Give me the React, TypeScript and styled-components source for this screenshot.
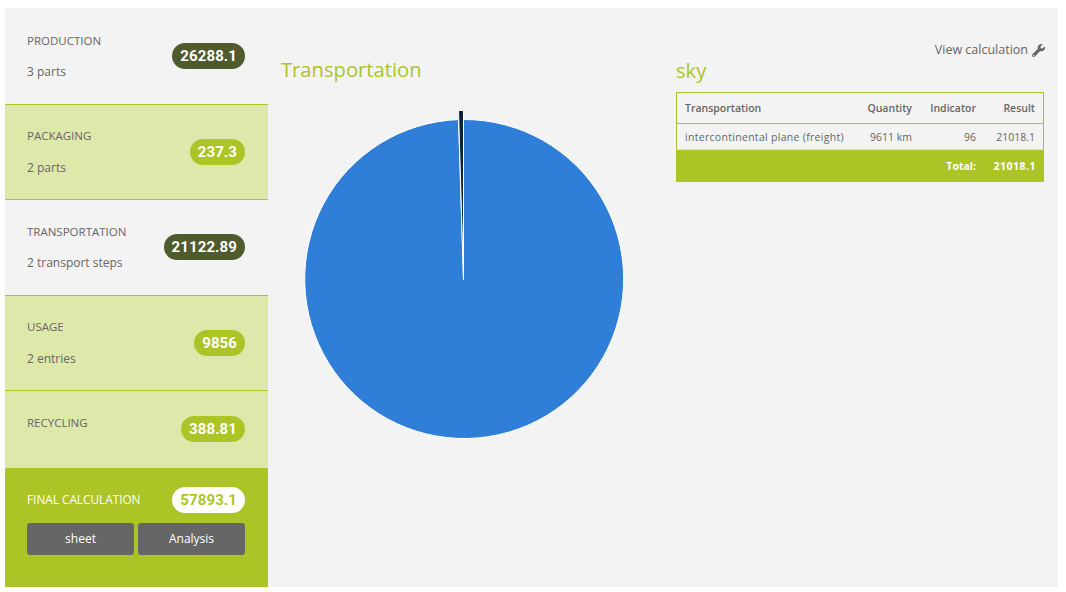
import React from 'react';
import styled, { createGlobalStyle } from 'styled-components';
import { FaWrench } from 'react-icons/fa';

const GREEN = '#adc427';
const PALE = '#dfe8ab';
const TEXT = '#666666';
const FONT = `"Open Sans", "DejaVu Sans", sans-serif`;

const GlobalStyle = createGlobalStyle`
    html, body {
        margin: 0;
        background: #ffffff;
    }
    body {
        font-family: ${FONT};
        color: ${TEXT};
    }
`;

type Step = {
    title: string;
    note?: string;
    value: string;
    dark?: boolean;
    pale?: boolean;
    height: number;
    top: number;
    badgeTop: number;
};

const steps: Step[] = [
    { title: 'PRODUCTION', note: '3 parts', value: '26288.1', dark: true, height: 97, top: 25.5, badgeTop: 9.5 },
    { title: 'PACKAGING', note: '2 parts', value: '237.3', pale: true, height: 95, top: 24, badgeTop: 10 },
    { title: 'TRANSPORTATION', note: '2 transport steps', value: '21122.89', dark: true, height: 96, top: 24.5, badgeTop: 9.5 },
    { title: 'USAGE', note: '2 entries', value: '9856', pale: true, height: 95, top: 24, badgeTop: 10 },
    { title: 'RECYCLING', value: '388.81', pale: true, height: 77, top: 24.5, badgeTop: 0.5 },
];

const Pie = () => (
    <PieSvg width="320" height="332" viewBox="0 0 320 332">
        <path
            d="M159.5 171 L159.5 10.5 A159.5 159.5 0 1 1 154.5 10.6 Z"
            fill="#2f7ed8"
            stroke="#ffffff"
            strokeWidth="1"
            strokeLinejoin="round"
        />
        <path d="M159.5 171 L159.5 1.5 L154.5 1.5 Z" fill="#0d233a" stroke="#ffffff" strokeWidth="1" strokeLinejoin="round" />
    </PieSvg>
);

export default function App() {
    return (
        <>
            <GlobalStyle />
            <Page>
                <Sidebar>
                    {steps.map((step) => (
                        <Row key={step.title} $pale={step.pale} $height={step.height} $top={step.top}>
                            <div>
                                <RowTitle>{step.title}</RowTitle>
                                {step.note && <RowNote>{step.note}</RowNote>}
                            </div>
                            <Badge $dark={step.dark} $top={step.badgeTop}>{step.value}</Badge>
                        </Row>
                    ))}
                    <Final>
                        <FinalTop>
                            <FinalTitle>FINAL CALCULATION</FinalTitle>
                            <WhiteBadge $top={0}>57893.1</WhiteBadge>
                        </FinalTop>
                        <Buttons>
                            <Button>sheet</Button>
                            <Button>Analysis</Button>
                        </Buttons>
                    </Final>
                </Sidebar>
                <ChartColumn>
                    <ChartTitle>Transportation</ChartTitle>
                    <Pie />
                </ChartColumn>
                <DetailColumn>
                    <ViewLink>
                        View calculation <FaWrench size={13} />
                    </ViewLink>
                    <DetailTitle>sky</DetailTitle>
                    <Table>
                        <thead>
                            <tr>
                                <Th $width={182}>Transportation</Th>
                                <Th $right $width={62}>Quantity</Th>
                                <Th $right $width={64}>Indicator</Th>
                                <Th $right $width={60}>Result</Th>
                            </tr>
                        </thead>
                        <tbody>
                            <tr>
                                <NameCell>intercontinental plane (freight)</NameCell>
                                <Td $right>9611 km</Td>
                                <Td $right>96</Td>
                                <Td $right>21018.1</Td>
                            </tr>
                        </tbody>
                        <tfoot>
                            <tr>
                                <TotalCell colSpan={3}>Total:</TotalCell>
                                <TotalValue>21018.1</TotalValue>
                            </tr>
                        </tfoot>
                    </Table>
                </DetailColumn>
            </Page>
        </>
    );
}

const Page = styled.div`
    display: flex;
    width: 1053px;
    height: 579px;
    margin: 8px 0 0 5px;
    background: #f3f3f3;
`;

const Sidebar = styled.div`
    width: 263px;
    flex-shrink: 0;
    display: flex;
    flex-direction: column;
`;

const Row = styled.div<{ $pale?: boolean; $height: number; $top: number }>`
    box-sizing: border-box;
    height: ${(p) => p.$height}px;
    padding: ${(p) => p.$top}px 23px 0 22px;
    display: flex;
    justify-content: space-between;
    align-items: flex-start;
    background: ${(p) => (p.$pale ? PALE : 'transparent')};
    border-bottom: 1px solid ${GREEN};
    &:nth-child(5) {
        border-bottom: 0;
    }
`;

const RowTitle = styled.div`
    font-size: 11.5px;
    line-height: 14px;
`;

const RowNote = styled.div`
    font-size: 12px;
    line-height: 14px;
    margin-top: 17.5px;
`;

const Badge = styled.span<{ $dark?: boolean; $top: number }>`
    height: 26px;
    margin-top: ${(p) => p.$top}px;
    padding: 0 8px;
    border-radius: 13px;
    background: ${(p) => (p.$dark ? '#4f5a2d' : GREEN)};
    color: #ffffff;
    font-family: Roboto, ${FONT};
    font-size: 15px;
    font-weight: 700;
    line-height: 26px;
    letter-spacing: 0.1px;
`;

const Final = styled.div`
    flex: 1;
    background: ${GREEN};
    padding: 19px 23px 0 22px;
`;

const FinalTop = styled.div`
    display: flex;
    justify-content: space-between;
    align-items: center;
`;

const FinalTitle = styled.span`
    color: #ffffff;
    font-size: 11.8px;
    padding-bottom: 2px;
`;

const WhiteBadge = styled(Badge)`
    background: #ffffff;
    color: ${GREEN};
`;

const Buttons = styled.div`
    display: flex;
    gap: 4px;
    margin-top: 10px;
`;

const Button = styled.div`
    flex: 1;
    height: 32px;
    background: #666666;
    border-radius: 3px;
    color: #ffffff;
    font-size: 12px;
    font-weight: 500;
    line-height: 32px;
    text-align: center;
`;

const ChartColumn = styled.div`
    width: 408px;
    flex-shrink: 0;
    padding-top: 46px;
    box-sizing: border-box;
`;

const ChartTitle = styled.h2`
    margin: 0 0 0 13px;
    color: ${GREEN};
    font-size: 20.2px;
    font-weight: 400;
    line-height: 30px;
`;

const PieSvg = styled.svg`
    display: block;
    margin: 24.5px 0 0 36px;
`;

const DetailColumn = styled.div`
    width: 368px;
    padding-top: 34px;
`;

const ViewLink = styled.div`
    display: flex;
    justify-content: flex-end;
    align-items: center;
    gap: 4px;
    font-size: 12.5px;
    line-height: 16px;
    height: 16px;
    margin-right: -1px;
`;

const DetailTitle = styled.h2`
    margin: 0;
    color: ${GREEN};
    font-size: 20.2px;
    font-weight: 400;
    line-height: 25px;
    height: 34px;
`;

const Table = styled.table`
    width: 368px;
    table-layout: fixed;
    border-collapse: separate;
    border-spacing: 0;
    font-size: 10.5px;
`;

const Th = styled.th<{ $right?: boolean; $width: number }>`
    box-sizing: border-box;
    width: ${(p) => p.$width}px;
    height: 32px;
    padding: 0 8px;
    font-weight: 600;
    white-space: nowrap;
    text-align: ${(p) => (p.$right ? 'right' : 'left')};
    border-top: 1px solid ${GREEN};
    border-bottom: 1px solid ${GREEN};
    &:first-child {
        border-left: 1px solid ${GREEN};
    }
    &:last-child {
        border-right: 1px solid ${GREEN};
    }
`;

const Td = styled.td<{ $right?: boolean }>`
    box-sizing: border-box;
    height: 26px;
    padding: 0 8px;
    text-align: ${(p) => (p.$right ? 'right' : 'left')};
    white-space: nowrap;
    border-bottom: 1px solid #dddddd;
    &:first-child {
        border-left: 1px solid ${GREEN};
    }
    &:last-child {
        border-right: 1px solid ${GREEN};
    }
`;

const NameCell = styled(Td)`
    letter-spacing: 0.3px;
`;

const TotalCell = styled.td`
    box-sizing: border-box;
    height: 32px;
    padding: 0 8px;
    background: ${GREEN};
    color: #ffffff;
    font-weight: 700;
    text-align: right;
`;

const TotalValue = styled(TotalCell)`
    letter-spacing: 0.5px;
`;
